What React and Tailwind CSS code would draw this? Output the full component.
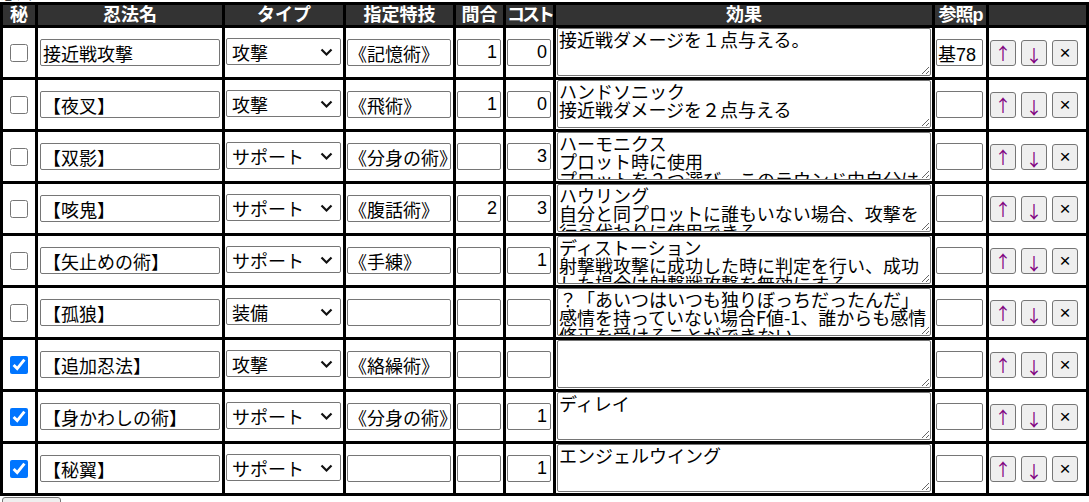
const rows = [
  {
    secret: false,
    name: "接近戦攻撃",
    type: "攻撃",
    skill: "《記憶術》",
    range: "1",
    cost: "0",
    effect: "接近戦ダメージを１点与える。",
    page: "基78",
  },
  {
    secret: false,
    name: "【夜叉】",
    type: "攻撃",
    skill: "《飛術》",
    range: "1",
    cost: "0",
    effect: "ハンドソニック\n接近戦ダメージを２点与える",
    page: "",
  },
  {
    secret: false,
    name: "【双影】",
    type: "サポート",
    skill: "《分身の術》",
    range: "",
    cost: "3",
    effect:
      "ハーモニクス\nプロット時に使用\nプロットを２つ選び、このラウンド中自分は両方のプロットにいるものとして扱う。",
    page: "",
  },
  {
    secret: false,
    name: "【咳鬼】",
    type: "サポート",
    skill: "《腹話術》",
    range: "2",
    cost: "3",
    effect:
      "ハウリング\n自分と同プロットに誰もいない場合、攻撃を行う代わりに使用できる。",
    page: "",
  },
  {
    secret: false,
    name: "【矢止めの術】",
    type: "サポート",
    skill: "《手練》",
    range: "",
    cost: "1",
    effect:
      "ディストーション\n射撃戦攻撃に成功した時に判定を行い、成功した場合は射撃戦攻撃を無効にする。",
    page: "",
  },
  {
    secret: false,
    name: "【孤狼】",
    type: "装備",
    skill: "",
    range: "",
    cost: "",
    effect:
      "？「あいつはいつも独りぼっちだったんだ」\n感情を持っていない場合F値-1、誰からも感情修正を受けることができない。",
    page: "",
  },
  {
    secret: true,
    name: "【追加忍法】",
    type: "攻撃",
    skill: "《絡繰術》",
    range: "",
    cost: "",
    effect: "",
    page: "",
  },
  {
    secret: true,
    name: "【身かわしの術】",
    type: "サポート",
    skill: "《分身の術》",
    range: "",
    cost: "1",
    effect: "ディレイ",
    page: "",
  },
  {
    secret: true,
    name: "【秘翼】",
    type: "サポート",
    skill: "",
    range: "",
    cost: "1",
    effect: "エンジェルウイング",
    page: "",
  },
];

const types = ["攻撃", "サポート", "装備"];

const inputCls =
  "h-[27px] rounded-[2px] border border-[#767676] bg-white text-[18px] leading-[25px] outline-none";

function Head({ children, className = "" }) {
  return (
    <div
      className={`h-[20px] whitespace-nowrap bg-[#333333] text-center text-[18px] font-bold leading-[20px] text-white ${className}`}
    >
      {children}
    </div>
  );
}

function MoveButton({ children, className = "" }) {
  return (
    <button
      type="button"
      className={`flex h-[26px] w-[26px] items-center justify-center rounded-[3px] border border-[#767676] bg-[#efefef] ${className}`}
    >
      {children}
    </button>
  );
}

function NinpoRow({ row }) {
  return (
    <>
      <div className="flex h-[49px] items-center justify-center bg-white">
        <input
          type="checkbox"
          defaultChecked={row.secret}
          className="h-[18px] w-[18px] accent-[#0075ff]"
        />
      </div>
      <div className="flex h-[49px] items-center bg-white pl-[2px]">
        <input
          defaultValue={row.name}
          className={`${inputCls} w-[180px] px-[2px]`}
        />
      </div>
      <div className="flex h-[49px] items-center bg-white pl-[1px]">
        <div className="relative">
          <select
            defaultValue={row.type}
            className={`${inputCls} w-[115px] appearance-none pl-[5px] pt-[3px]`}
          >
            {types.map((t) => (
              <option key={t}>{t}</option>
            ))}
          </select>
          <svg
            className="pointer-events-none absolute right-[8px] top-[10px]"
            width="13"
            height="9"
            viewBox="0 0 13 9"
          >
            <path
              d="M1.5 1.5l5 5 5-5"
              fill="none"
              stroke="#111"
              strokeWidth="2.2"
            />
          </svg>
        </div>
      </div>
      <div className="flex h-[49px] items-center bg-white pl-[1px]">
        <input
          defaultValue={row.skill}
          className={`${inputCls} w-[104px] px-[1px]`}
        />
      </div>
      <div className="flex h-[49px] items-center bg-white pl-[1px]">
        <input
          defaultValue={row.range}
          className={`${inputCls} w-[44px] pr-[3px] text-right`}
        />
      </div>
      <div className="flex h-[49px] items-center bg-white pl-[1px]">
        <input
          defaultValue={row.cost}
          className={`${inputCls} w-[44px] pr-[3px] text-right`}
        />
      </div>
      <div className="h-[49px] bg-white py-[0px] pl-[1px]">
        <textarea
          defaultValue={row.effect}
          className="h-[48px] w-[374px] overflow-hidden rounded-[2px] border border-[#767676] bg-white px-[1px] pt-[1px] font-['Noto_Sans_CJK_JP',sans-serif] text-[18px] leading-[18px] outline-none"
        />
      </div>
      <div className="flex h-[49px] items-center bg-white pl-[1px]">
        <input
          defaultValue={row.page}
          className={`${inputCls} w-[47px] px-[1px]`}
        />
      </div>
      <div className="flex h-[49px] items-center gap-[5px] bg-white pl-[1px]">
        <MoveButton>
          <span className="font-['Noto_Sans_CJK_JP',sans-serif] text-[17px] leading-none text-[#800080]">
            ↑
          </span>
        </MoveButton>
        <MoveButton>
          <span className="mt-[3px] font-['Noto_Sans_CJK_JP',sans-serif] text-[17px] leading-none text-[#800080]">
            ↓
          </span>
        </MoveButton>
        <MoveButton>
          <span className="text-[19px] leading-none text-black">×</span>
        </MoveButton>
      </div>
    </>
  );
}

export default function App() {
  return (
    <div className="h-screen overflow-hidden bg-white font-['Liberation_Sans','Noto_Sans_CJK_JP',sans-serif] text-black">
      <div className="-mt-[14px] h-[16px] text-[16px] font-bold leading-[16px]">
        忍法：
      </div>
      <div className="grid w-[1089px] grid-cols-[32px_184px_118px_107px_47px_47px_376px_51px_97px] gap-[3px] bg-black p-[3px]">
        <Head>秘</Head>
        <Head>忍法名</Head>
        <Head>タイプ</Head>
        <Head>指定特技</Head>
        <Head>間合</Head>
        <Head className="tracking-[-3px] text-[17px]">コスト</Head>
        <Head>効果</Head>
        <Head className="tracking-[-1px]">参照p</Head>
        <Head />
        {rows.map((row, i) => (
          <NinpoRow key={i} row={row} />
        ))}
      </div>
      <button
        type="button"
        className="ml-[2px] mt-[1px] h-[30px] w-[59px] rounded-[3px] border border-[#767676] bg-[#efefef] text-[16px]"
      >
        追加
      </button>
    </div>
  );
}
